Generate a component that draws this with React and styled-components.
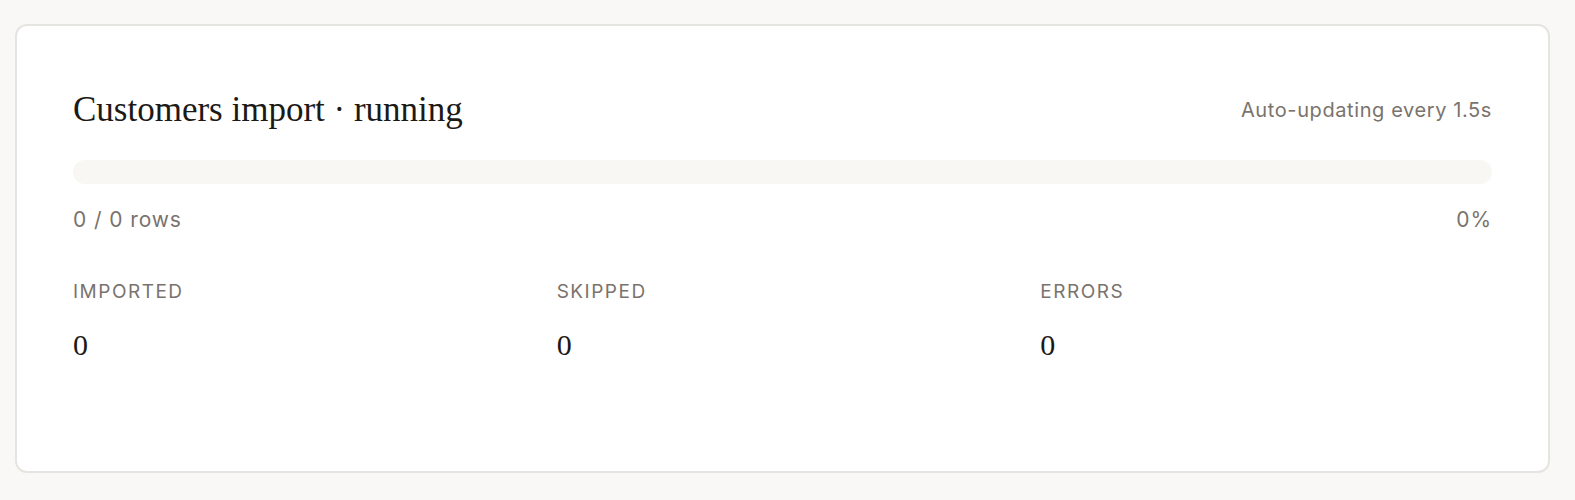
import React from 'react'
import styled, { createGlobalStyle } from 'styled-components'

const Global = createGlobalStyle`
  html, body {
    margin: 0;
    padding: 0;
    background: #f9f8f6;
    overflow: hidden;
  }
`

const Page = styled.div`
  padding: 24px 25px 0 15px;
`

const Card = styled.section`
  background: #ffffff;
  border: 2px solid #e6e4e0;
  border-radius: 12px;
  padding: 64px 56px 108px;
`

const Header = styled.div`
  display: flex;
  align-items: center;
  justify-content: space-between;
  height: 40px;
`

const Title = styled.h2`
  margin: 0;
  font-family: "Liberation Serif", "Times New Roman", serif;
  font-weight: 400;
  font-size: 35px;
  line-height: 40px;
  color: #1c1916;
`

const Muted = styled.span`
  font-family: Inter, "Noto Sans", sans-serif;
  font-size: ${p => p.size || 20}px;
  letter-spacing: ${p => p.spacing || 0.6}px;
  color: #7a736d;
`

const Track = styled.div`
  margin-top: 30px;
  height: 24px;
  border-radius: 12px;
  background: #f8f7f4;
  overflow: hidden;
`

const Fill = styled.div`
  height: 100%;
  background: #e9e5de;
`

const Progress = styled.div`
  display: flex;
  justify-content: space-between;
  margin-top: 22px;
  line-height: 28px;
`

const Stats = styled.div`
  display: grid;
  grid-template-columns: repeat(3, 1fr);
  column-gap: 32px;
  margin-top: 46px;
`

const Stat = styled.div`
  display: flex;
  flex-direction: column;
`

const Label = styled.span`
  font-family: Inter, "Noto Sans", sans-serif;
  font-size: 19px;
  line-height: 24px;
  letter-spacing: 1.5px;
  text-transform: uppercase;
  color: #7a736d;
`

const Value = styled.span`
  margin-top: 23px;
  font-family: "Liberation Serif", "Times New Roman", serif;
  font-size: 30px;
  line-height: 36px;
  color: #1c1916;
`

const stats = [
  { label: 'Imported', value: 0 },
  { label: 'Skipped', value: 0 },
  { label: 'Errors', value: 0 },
]

export default function App() {
  const done = 0
  const total = 0
  const pct = total ? Math.round((done / total) * 100) : 0
  return (
    <Page>
      <Global />
      <Card>
        <Header>
          <Title>Customers import · running</Title>
          <Muted>Auto-updating every 1.5s</Muted>
        </Header>
        <Track>
          <Fill style={{ width: `${pct}%` }} />
        </Track>
        <Progress>
          <Muted size={21} spacing={0.9}>{done} / {total} rows</Muted>
          <Muted size={21} spacing={0.9}>{pct}%</Muted>
        </Progress>
        <Stats>
          {stats.map(s => (
            <Stat key={s.label}>
              <Label>{s.label}</Label>
              <Value>{s.value}</Value>
            </Stat>
          ))}
        </Stats>
      </Card>
    </Page>
  )
}
